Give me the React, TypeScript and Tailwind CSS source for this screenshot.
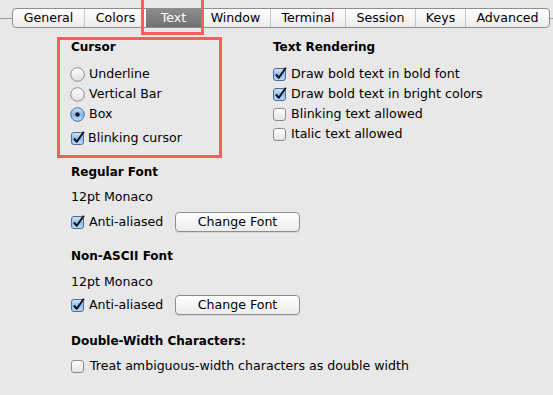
import React from "react";

const TABS = [
  { label: "General", w: "w-[71px]" },
  { label: "Colors", w: "w-[62px]" },
  { label: "Text", w: "w-[55px]", active: true },
  { label: "Window", w: "w-[69px]" },
  { label: "Terminal", w: "w-[75px]" },
  { label: "Session", w: "w-[70px]" },
  { label: "Keys", w: "w-[50px]" },
  { label: "Advanced", w: "w-[84px]" },
];

function Check({ on }: { on?: boolean }) {
  return (
    <svg width="14" height="14" viewBox="0 0 14 14" className="shrink-0">
      <defs>
        <linearGradient id="cbw" x1="0" y1="0" x2="0" y2="1">
          <stop offset="0" stopColor="#ffffff" />
          <stop offset="1" stopColor="#e4e4e4" />
        </linearGradient>
        <linearGradient id="cbb" x1="0" y1="0" x2="0" y2="1">
          <stop offset="0" stopColor="#d6e8fb" />
          <stop offset="0.5" stopColor="#8fbff0" />
          <stop offset="1" stopColor="#b9dcfb" />
        </linearGradient>
      </defs>
      <rect x="0.5" y="1.5" width="12" height="12" rx="2.5" fill={on ? "url(#cbb)" : "url(#cbw)"} stroke={on ? "#4a6c93" : "#8c8c8c"} />
      {on && <path d="M3 7.5 L5.8 10.8 L12.8 0.8" fill="none" stroke="#111" strokeWidth="2" strokeLinejoin="round" />}
    </svg>
  );
}

function Radio({ on }: { on?: boolean }) {
  return (
    <svg width="15" height="15" viewBox="0 0 15 15" className="shrink-0">
      <defs>
        <linearGradient id="rw" x1="0" y1="0" x2="0" y2="1">
          <stop offset="0" stopColor="#ffffff" />
          <stop offset="1" stopColor="#dedede" />
        </linearGradient>
        <linearGradient id="rb" x1="0" y1="0" x2="0" y2="1">
          <stop offset="0" stopColor="#cfe3f9" />
          <stop offset="0.5" stopColor="#86b8ee" />
          <stop offset="1" stopColor="#bfe0fb" />
        </linearGradient>
      </defs>
      <circle cx="7.5" cy="7.5" r="6.8" fill={on ? "url(#rb)" : "url(#rw)"} stroke={on ? "#4a6c93" : "#8a8a8a"} />
      {on && <circle cx="7.5" cy="7.5" r="2.2" fill="#1a1a1a" />}
    </svg>
  );
}

function Row({ children }: { children: React.ReactNode }) {
  return <div className="flex items-center h-[20px]">{children}</div>;
}

function FontButton() {
  return (
    <button className="ml-[9px] w-[125px] h-[20px] rounded-[4px] border border-[#8d8d8d] bg-gradient-to-b from-white to-[#ececec] text-[12.6px] leading-none text-black shadow-[0_1px_0_rgba(0,0,0,0.08)]">
      Change Font
    </button>
  );
}

export default function App() {
  return (
    <div className="relative w-[553px] h-[395px] overflow-hidden bg-[#e8e8e8] font-['DejaVu_Sans',sans-serif] text-[12.6px] text-black">
      {/* tab strip */}
      <div className="flex items-center pt-[8px]">
        <div className="w-[12px] h-px bg-[#9c9c9c]" />
        <div className="flex h-[20px] rounded-[4px] border border-[#8e8e8e] bg-gradient-to-b from-white to-[#ececec] overflow-hidden">
          {TABS.map((t, i) => (
            <div
              key={t.label}
              className={`${t.w} flex items-center justify-center ${
                t.active
                  ? "bg-gradient-to-b from-[#8c8c8c] to-[#717171] text-white"
                  : i > 0 && !TABS[i - 1].active
                  ? "border-l border-[#c6c6c6]"
                  : ""
              }`}
            >
              {t.label}
            </div>
          ))}
        </div>
        <div className="flex-1 h-px bg-[#9c9c9c]" />
      </div>

      {/* annotation around the Text tab */}
      <div className="absolute left-[141px] top-[-3px] w-[63px] h-[38px] border-[3px] border-[#f1605a]" />

      <div className="pt-[9px]">
        <div className="flex">
          <div className="ml-[57px] w-[165px] h-[121px] border-[3px] border-[#f1605a] pl-[11px] pt-0">
            <div className="font-bold text-[12px] h-[14px] leading-[14px]">Cursor</div>
            <div className="mt-[10px] -ml-[1px]">
              <Row><Radio /><span className="ml-[4px]">Underline</span></Row>
              <Row><Radio /><span className="ml-[4px]">Vertical Bar</span></Row>
              <Row><Radio on /><span className="ml-[4px]">Box</span></Row>
            </div>
            <div className="mt-[4px]">
              <Row><Check on /><span className="ml-[3px]">Blinking cursor</span></Row>
            </div>
          </div>

          <div className="ml-[51px] pt-[3px]">
            <div className="font-bold text-[12px] h-[14px] leading-[14px]">Text Rendering</div>
            <div className="mt-[10px]">
              <Row><Check on /><span className="ml-[4px]">Draw bold text in bold font</span></Row>
              <Row><Check on /><span className="ml-[4px]">Draw bold text in bright colors</span></Row>
              <Row><Check /><span className="ml-[4px]">Blinking text allowed</span></Row>
              <Row><Check /><span className="ml-[4px]">Italic text allowed</span></Row>
            </div>
          </div>
        </div>

        <div className="pl-[71px]">
          <div className="mt-[7px] font-bold text-[12px] h-[14px] leading-[14px]">Regular Font</div>
          <div className="mt-[11px] h-[14px] leading-[14px]">12pt Monaco</div>
          <div className="mt-[8px] flex items-center h-[20px]">
            <Check on />
            <span className="ml-[4px] w-[77px]">Anti-aliased</span>
            <FontButton />
          </div>

          <div className="mt-[17px] font-bold text-[12px] h-[14px] leading-[14px]">Non-ASCII Font</div>
          <div className="mt-[12px] h-[14px] leading-[14px]">12pt Monaco</div>
          <div className="mt-[6px] flex items-center h-[20px]">
            <Check on />
            <span className="ml-[4px] w-[77px]">Anti-aliased</span>
            <FontButton />
          </div>

          <div className="mt-[19px] font-bold text-[12px] h-[14px] leading-[14px]">Double-Width Characters:</div>
          <div className="mt-[8px] flex items-center h-[20px]">
            <Check />
            <span className="ml-[5px]">Treat ambiguous-width characters as double width</span>
          </div>
        </div>
      </div>
    </div>
  );
}
